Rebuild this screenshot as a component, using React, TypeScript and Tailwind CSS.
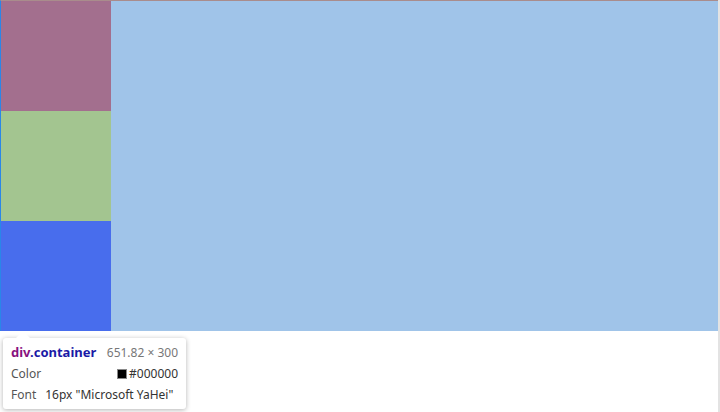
export default function App() {
  return (
    <div className="relative h-[412px] w-[720px] overflow-hidden bg-white font-['Noto_Sans',sans-serif]">
      {/* highlighted container */}
      <div className="flex h-[331px] w-[718px] border-l border-t border-l-[#2a86e8] border-t-[#a98c8c]">
        <div className="flex w-[110px] flex-col">
          <div className="h-[110px] bg-[#a36f8e]" />
          <div className="h-[110px] bg-[#a3c590]" />
          <div className="h-[110px] bg-[#486ded]" />
        </div>
        <div className="flex-1 bg-[#a0c4e9]" />
      </div>
      <div className="absolute right-0 top-0 h-[412px] w-[2px] bg-[#e3e3e3]" />

      {/* devtools tooltip */}
      <div className="absolute left-[3px] top-[338px] w-[183px] whitespace-nowrap rounded-[3px] bg-white px-2 pb-[4px] pt-[4px] text-[12px] leading-[21px] text-[#555] shadow-[0_1px_5px_rgba(0,0,0,0.3)]">
        <div className="absolute -top-[7px] left-[12px] h-0 w-0 border-x-[8px] border-b-[8px] border-x-transparent border-b-white" />
        <div className="flex items-center justify-between">
          <span className="text-[13px] font-bold">
            <span className="text-[#881280]">div</span>
            <span className="text-[#1a1aa6]">.container</span>
          </span>
          <span className="text-[#777]">651.82 × 300</span>
        </div>
        <div className="flex items-center justify-between">
          <span>Color</span>
          <span className="flex items-center gap-[2px] text-[#333]">
            <span className="inline-block h-[10px] w-[10px] border border-[#888] bg-black" />
            #000000
          </span>
        </div>
        <div className="flex items-center gap-[9px]">
          <span>Font</span>
          <span className="text-[#333]">16px "Microsoft YaHei"</span>
        </div>
      </div>
    </div>
  );
}
